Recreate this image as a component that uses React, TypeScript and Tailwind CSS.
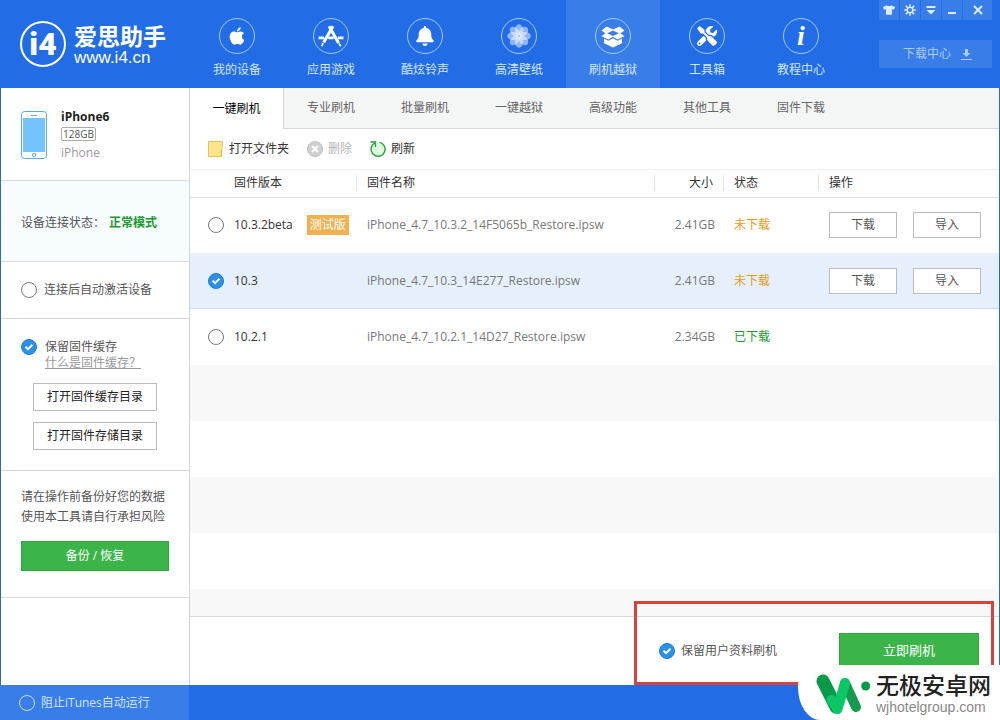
import React, { useState } from 'react';
import { FaApple, FaBell, FaTools, FaTshirt } from 'react-icons/fa';

interface Firmware {
  version: string;
  beta?: boolean;
  file: string;
  size: string;
  downloaded: boolean;
}

const FIRMWARES: Firmware[] = [
  { version: '10.3.2beta', beta: true, file: 'iPhone_4.7_10.3.2_14F5065b_Restore.ipsw', size: '2.41GB', downloaded: false },
  { version: '10.3', file: 'iPhone_4.7_10.3_14E277_Restore.ipsw', size: '2.41GB', downloaded: false },
  { version: '10.2.1', file: 'iPhone_4.7_10.2.1_14D27_Restore.ipsw', size: '2.34GB', downloaded: true },
];

const TABS = ['一键刷机', '专业刷机', '批量刷机', '一键越狱', '高级功能', '其他工具', '固件下载'];

const EIGHTHS = [0, 45, 90, 135, 180, 225, 270, 315];

const AppsIcon = () => (
  <svg viewBox="0 0 24 24" className="size-[26px]" fill="none" stroke="currentColor">
    <path d="M13.8 3 L5.2 18" strokeWidth="2.8" />
    <path d="M4.6 18.5 L3.4 21.5" strokeWidth="1.6" />
    <path d="M10.2 3 L19 18.5" strokeWidth="2.8" />
    <path d="M19.4 19 L21 21.5" strokeWidth="1.6" />
    <path d="M0.5 13.8 H5.5 M9.5 13.8 H14.5 M18.5 13.8 H23.5" strokeWidth="2.6" />
  </svg>
);

const FlowerIcon = () => (
  <svg viewBox="0 0 24 24" className="size-6" fill="currentColor">
    {EIGHTHS.map((deg) => (
      <ellipse key={deg} cx="12" cy="6" rx="4" ry="5.8" opacity="0.5" transform={`rotate(${deg} 12 12)`} />
    ))}
    <circle cx="12" cy="12" r="0.8" className="fill-[#8ab4f2]" />
  </svg>
);

const BoxIcon = () => (
  <svg viewBox="0 0 24 24" className="size-6" fill="currentColor">
    <path
      fillRule="evenodd"
      d="M5.5 2.5 L12 5.5 L18.5 2.5 L23.5 6.5 L19.5 9.2 L23.5 12.2 L16.5 15.5 L12 12.8 L7.5 15.5 L0.5 12.2 L4.5 9.2 L0.5 6.5 Z M12 6.5 L6.2 9.2 L12 12 L17.8 9.2 Z"
    />
    <path d="M3 14.6 L7.5 16.8 L12 14.2 L16.5 16.8 L21 14.6 V19.2 L12 23.5 L3 19.2 Z" />
  </svg>
);

const GearIcon = () => (
  <svg viewBox="0 0 12 12" className="size-3" fill="none" stroke="currentColor">
    <circle cx="6" cy="6" r="2.8" strokeWidth="1.5" />
    {EIGHTHS.map((deg) => (
      <path key={deg} d="M6 3 V0.2" strokeWidth="1.5" transform={`rotate(${deg} 6 6)`} />
    ))}
  </svg>
);

const InfoIcon = () => <span className="font-['Liberation_Serif',serif] text-[28px] leading-none font-bold italic">i</span>;

const NAV = [
  { label: '我的设备', icon: <FaApple className="size-5" /> },
  { label: '应用游戏', icon: <AppsIcon /> },
  { label: '酷炫铃声', icon: <FaBell className="size-5" /> },
  { label: '高清壁纸', icon: <FlowerIcon /> },
  { label: '刷机越狱', icon: <BoxIcon />, active: true },
  { label: '工具箱', icon: <FaTools className="size-5" /> },
  { label: '教程中心', icon: <InfoIcon /> },
];

const WINDOW_BUTTONS = [
  { label: '皮肤', icon: <FaTshirt className="size-3" /> },
  { label: '设置', icon: <GearIcon /> },
  {
    label: '菜单',
    icon: (
      <svg viewBox="0 0 10 10" className="size-[10px]" fill="currentColor">
        <path d="M0.5 1 H9.5 V3 H0.5 Z M0.5 5 H9.5 L5 9.5 Z" />
      </svg>
    ),
  },
  {
    label: '最小化',
    icon: (
      <svg viewBox="0 0 10 10" className="size-[10px]" fill="currentColor">
        <path d="M1 7 H9 V9 H1 Z" />
      </svg>
    ),
  },
];

interface RoundCheckProps {
  id: string;
  type?: 'checkbox' | 'radio';
  name?: string;
  light?: boolean;
  checked: boolean;
  onChange: (checked: boolean) => void;
}

const RoundCheck: React.FC<RoundCheckProps> = ({ id, type = 'checkbox', name, light, checked, onChange }) => (
  <span className="relative block size-4 shrink-0">
    <input
      id={id}
      type={type}
      name={name}
      checked={checked}
      onChange={(e) => onChange(e.target.checked)}
      className={`peer block size-4 appearance-none rounded-full border checked:border-[#1c7fd6] checked:bg-[#2b90e8] ${light ? 'border-[#c8e2ff]' : 'border-[#777] bg-white'}`}
    />
    <svg viewBox="0 0 16 16" className="pointer-events-none absolute inset-0 hidden size-4 peer-checked:block" fill="none" stroke="white" strokeWidth="2">
      <path d="M4.5 7.8 L7 10.2 L11.5 5.8" />
    </svg>
  </span>
);

const Header = () => (
  <header className="flex h-22 shrink-0 bg-[#226de6] text-white">
    <div className="flex w-[190px] shrink-0 items-center gap-2 pl-5">
      <div className="flex size-[46px] items-center justify-center rounded-full border-2 border-white font-['Roboto',sans-serif] text-[32px] leading-none font-black">i4</div>
      <div>
        <div className="text-[23px] leading-7 font-bold whitespace-nowrap">爱思助手</div>
        <div className="font-['Liberation_Sans',sans-serif] text-[17px] leading-4">www.i4.cn</div>
      </div>
    </div>
    <nav className="flex flex-1">
      {NAV.map((item) => (
        <a
          key={item.label}
          href="#"
          className={`flex w-[94px] flex-col items-center pt-[18px] ${item.active ? 'bg-[#397de9]' : ''}`}
        >
          <span className="flex size-9 items-center justify-center rounded-full border border-[#a5cbfa]">{item.icon}</span>
          <span className="mt-2 leading-4 text-[#d3e6fd]">{item.label}</span>
        </a>
      ))}
    </nav>
    <div className="mr-2 flex w-[113px] shrink-0 flex-col gap-5">
      <div className="flex h-5 gap-px text-[#dcebff]">
        {WINDOW_BUTTONS.map((b) => (
          <button key={b.label} aria-label={b.label} className="flex w-5 items-center justify-center bg-[#397de9]">
            {b.icon}
          </button>
        ))}
        <button aria-label="关闭" className="flex flex-1 items-center justify-center bg-[#397de9]">
          <svg viewBox="0 0 10 10" className="size-[10px]" fill="none" stroke="currentColor" strokeWidth="2">
            <path d="M1 1 L9 9 M9 1 L1 9" />
          </svg>
        </button>
      </div>
      <button className="flex h-7 items-center justify-center gap-[10px] bg-[#397de9] pl-1 text-[#a9cbfa]">
        下载中心
        <svg viewBox="0 0 11 11" className="size-[11px]" fill="currentColor">
          <path d="M4 0 H7 V4 H9.5 L5.5 8 L1.5 4 H4 Z M0 10 H11 V11 H0 Z" />
        </svg>
      </button>
    </div>
  </header>
);

const Sidebar = () => {
  const [autoActivate, setAutoActivate] = useState(false);
  const [keepCache, setKeepCache] = useState(true);

  return (
    <aside className="w-[189px] shrink-0 border-r border-[#d2d6da] text-[#555]">
      <section className="flex h-[93px] gap-[14px] border-b border-[#d5d9dc] pt-[23px] pl-5">
        <svg viewBox="0 0 26 48" className="h-12 w-[26px]" fill="none">
          <rect x="0.5" y="0.5" width="25" height="47" rx="3" fill="white" stroke="#5aa9dc" />
          <rect x="2" y="7" width="22" height="34" fill="#73c4fb" />
          <path d="M10 4.5 H16" stroke="#5aa9dc" />
          <circle cx="13" cy="44" r="1.7" stroke="#5aa9dc" />
        </svg>
        <div className="flex flex-col items-start">
          <strong className="h-4 text-xs leading-3 text-[#222]">iPhone6</strong>
          <span className="rounded-xs border border-[#aaa] px-px text-[10px] leading-3">128GB</span>
          <span className="mt-1 leading-4 text-[#999]">iPhone</span>
        </div>
      </section>
      <section className="flex h-[81px] items-center gap-1 border-b border-[#d5d9dc] bg-[#f6fcff] pt-1 pl-5">
        <span>设备连接状态：</span>
        <strong className="text-[#1a9a2c]">正常模式</strong>
      </section>
      <section className="flex h-[57px] items-center gap-[7px] border-b border-[#d5d9dc] pl-5">
        <RoundCheck id="auto-activate" checked={autoActivate} onChange={setAutoActivate} />
        <label htmlFor="auto-activate">连接后自动激活设备</label>
      </section>
      <section className="h-[152px] border-b border-[#d5d9dc] pt-5 pl-5">
        <div className="flex items-center gap-2">
          <RoundCheck id="keep-cache" checked={keepCache} onChange={setKeepCache} />
          <label htmlFor="keep-cache">保留固件缓存</label>
        </div>
        <a href="#" className="ml-6 block text-[#999] underline">什么是固件缓存？</a>
        <div className="mt-3 ml-3 flex w-[124px] flex-col gap-[11px] text-[#222]">
          <button className="h-7 border border-[#bbb] bg-white">打开固件缓存目录</button>
          <button className="h-7 border border-[#bbb] bg-white">打开固件存储目录</button>
        </div>
      </section>
      <section className="h-[127px] border-b border-[#d5d9dc] px-5 pt-4">
        <p className="leading-5">
          请在操作前备份好您的数据
          <br />
          使用本工具请自行承担风险
        </p>
        <button className="mt-[14px] h-[30px] w-full border border-[#2fa53d] bg-[#3bb54a] text-white">备份 / 恢复</button>
      </section>
    </aside>
  );
};

const Toolbar = () => (
  <div className="flex h-[41px] items-center gap-[18px] border-b border-[#eceef0] pl-[18px] text-[#333]">
    <button className="flex items-center gap-[6px]">
      <svg viewBox="0 0 15 16" className="h-4 w-[15px]">
        <path d="M0.5 0.5 H14.5 L13.5 15.5 H0.5 Z" fill="#fde58a" stroke="#e3c560" />
        <path d="M13.2 9 V15" stroke="#e3b950" />
      </svg>
      打开文件夹
    </button>
    <button className="flex items-center gap-[5px] text-[#b5b5b5]" disabled>
      <svg viewBox="0 0 16 16" className="size-4" fill="none">
        <circle cx="8" cy="8" r="7.5" fill="#d0d0d0" stroke="#bdbdbd" />
        <path d="M5 5 L11 11 M11 5 L5 11" stroke="white" strokeWidth="2" />
      </svg>
      删除
    </button>
    <button className="flex items-center gap-[5px]">
      <svg viewBox="0 0 16 16" className="size-4" fill="none">
        <circle cx="8" cy="8.5" r="6.5" fill="#dcfadd" />
        <path d="M9.5 1.4 A7 7 0 1 1 2.5 4 L5 1.5" stroke="#2f9e3a" strokeWidth="1.4" />
        <path d="M0.5 1 H5.5 V6" stroke="#2f9e3a" strokeWidth="1.4" />
      </svg>
      刷新
    </button>
  </div>
);

const FirmwareTable = () => {
  const [selected, setSelected] = useState('10.3');

  return (
    <table className="w-full table-fixed text-left">
      <colgroup>
        <col className="w-[167px]" />
        <col />
        <col className="w-[69px]" />
        <col className="w-[95px]" />
        <col className="w-[180px]" />
      </colgroup>
      <thead>
        <tr className="h-[27px] border-b border-[#d9dde2] text-[#333]">
          <th className="p-0 font-normal"><div className="border-r border-[#dfe3e8] pl-11">固件版本</div></th>
          <th className="p-0 font-normal"><div className="border-r border-[#dfe3e8] pl-[10px]">固件名称</div></th>
          <th className="p-0 font-normal"><div className="border-r border-[#dfe3e8] pr-[10px] text-right">大小</div></th>
          <th className="p-0 font-normal"><div className="border-r border-[#dfe3e8] pl-[10px]">状态</div></th>
          <th className="p-0 pl-[10px] font-normal">操作</th>
        </tr>
      </thead>
      <tbody className="text-[#777]">
        {FIRMWARES.map((fw) => (
          <tr
            key={fw.version}
            className={`h-14 ${selected === fw.version ? 'bg-[#e5f0fc] shadow-[inset_0_-1px_0_#c9daee]' : 'bg-white'}`}
          >
            <td className="p-0">
              <div className="flex items-center pl-[18px]">
                <RoundCheck
                  id={`fw-${fw.version}`}
                  type="radio"
                  name="firmware"
                  checked={selected === fw.version}
                  onChange={() => setSelected(fw.version)}
                />
                <label htmlFor={`fw-${fw.version}`} className="ml-[10px] text-[#333]">{fw.version}</label>
                {fw.beta && <span className="ml-[14px] bg-[#f2b04e] px-[3px] leading-5 text-white">测试版</span>}
              </div>
            </td>
            <td className="p-0 pl-[10px]">{fw.file}</td>
            <td className="p-0 pr-[9px] text-right">{fw.size}</td>
            <td className={`p-0 pl-[10px] ${fw.downloaded ? 'text-[#1a9a2c]' : 'text-[#eb9a16]'}`}>
              {fw.downloaded ? '已下载' : '未下载'}
            </td>
            <td className="p-0 pl-[10px]">
              {!fw.downloaded && (
                <div className="flex gap-4 text-[#555]">
                  <button className="h-[26px] w-[68px] border border-[#bbb] bg-white">下载</button>
                  <button className="h-[26px] w-[68px] border border-[#bbb] bg-white">导入</button>
                </div>
              )}
            </td>
          </tr>
        ))}
      </tbody>
    </table>
  );
};

const FlashBar = () => {
  const [keepData, setKeepData] = useState(true);

  return (
    <div className="relative flex h-[69px] shrink-0 items-center justify-end border-t border-[#d5d9dc] pr-5">
      <RoundCheck id="keep-data" checked={keepData} onChange={setKeepData} />
      <label htmlFor="keep-data" className="mr-[62px] ml-[6px] text-[#555]">保留用户资料刷机</label>
      <button className="h-9 w-[140px] border border-[#2fa53d] bg-[#3bb54a] text-[13px] text-white">立即刷机</button>
      {/* highlight frame around the flash controls */}
      <div className="pointer-events-none absolute -top-4 right-[5px] bottom-0 w-[360px] border-3 border-[#d6433f]" />
    </div>
  );
};

const Watermark = () => (
  <div className="absolute right-0 bottom-0 flex h-[55px] w-[202px] items-center gap-1 rounded-tl-[10px_22px] rounded-bl-[22px_33px] bg-white pl-4">
    <svg viewBox="0 0 58 46" className="h-[46px] w-[58px]" fill="none" strokeLinecap="round">
      <path d="M31 13 L42 37" stroke="#17994f" strokeWidth="10" />
      <path d="M9 11 L22 37" stroke="#079a48" strokeWidth="13" />
      <path d="M17.5 30 L23.5 39 L31 13" stroke="#0cc765" strokeWidth="10" strokeLinejoin="round" />
      <circle cx="51.7" cy="16" r="4.5" fill="#079a48" />
    </svg>
    <div>
      <div className="text-[23px] leading-7 font-medium whitespace-nowrap text-[#222]">无极安卓网</div>
      <div className="font-['Liberation_Sans',sans-serif] text-sm leading-4 text-[#888]">wjhotelgroup.com</div>
    </div>
  </div>
);

export default function App() {
  const [blockItunes, setBlockItunes] = useState(false);

  return (
    <div className="relative flex min-h-screen flex-col overflow-hidden bg-white font-['Open_Sans','Noto_Sans_CJK_SC',sans-serif] text-xs">
      <Header />
      <div className="flex flex-1 border-x border-[#2a6fa8]">
        <Sidebar />
        <main className="flex min-w-0 flex-1 flex-col">
          <div role="tablist" className="flex h-[41px] shrink-0 text-[#666]">
            {TABS.map((tab, i) => (
              <button
                key={tab}
                role="tab"
                aria-selected={i === 0}
                className={`w-[94px] border-[#d5d9dc] ${i === 0 ? 'border-r bg-white text-black' : 'border-b bg-[#f4f5f5]'}`}
              >
                {tab}
              </button>
            ))}
            <div className="flex-1 border-b border-[#d5d9dc] bg-[#f4f5f5]" />
          </div>
          <Toolbar />
          <FirmwareTable />
          {/* empty striped rows */}
          <div className="flex-1 bg-[repeating-linear-gradient(#f8f8f8_0_56px,#fff_56px_112px)]" />
          <FlashBar />
        </main>
      </div>
      <footer className="flex h-[35px] shrink-0 bg-[#226de6] text-[#d3e6fd]">
        <div className="flex w-[189px] items-center gap-[6px] bg-[#397de9] pl-[19px]">
          <RoundCheck id="block-itunes" light checked={blockItunes} onChange={setBlockItunes} />
          <label htmlFor="block-itunes">阻止iTunes自动运行</label>
        </div>
      </footer>
      <Watermark />
    </div>
  );
}
